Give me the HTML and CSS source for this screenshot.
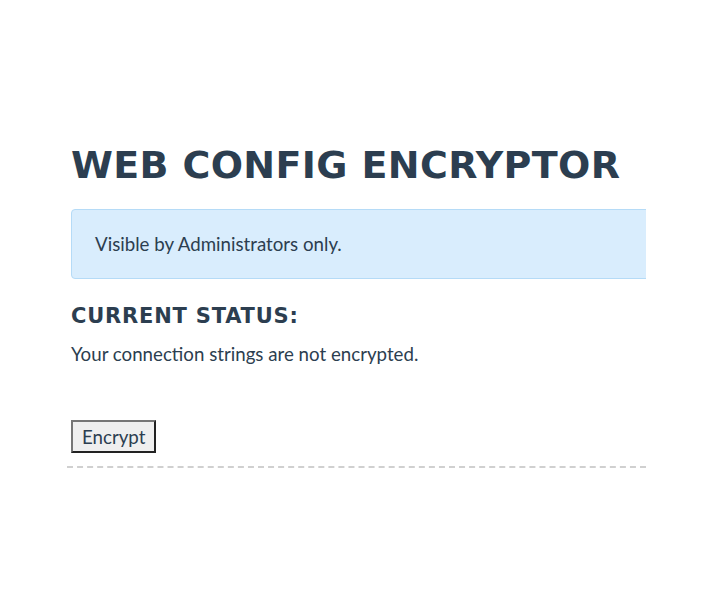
FILE: index.html
```html
<!DOCTYPE html>
<html>
<head>
<meta charset="utf-8">
<link rel="stylesheet" href="styles.css">
</head>
<body>
<div class="page">
  <div class="panel">
    <h1 class="title">WEB CONFIG ENCRYPTOR</h1>
    <div class="alert">Visible by Administrators only.</div>
    <h3 class="status-title">CURRENT STATUS:</h3>
    <p class="status-text">Your connection strings are not encrypted.</p>
    <button class="btn">Encrypt</button>
  </div>
</div>
</body>
</html>
```
FILE: styles.css
```css
html, body {
  margin: 0;
  padding: 0;
  background: #ffffff;
}
body {
  font-family: "Lato", "Liberation Sans", sans-serif;
  font-size: 18.7px;
  color: #2c3e50;
}
.page {
  padding-top: 137px;
  padding-left: 67px;
}
.panel {
  width: 575px;
  padding-left: 4px;
  overflow: hidden;
  border-bottom: 2px dashed #d0d0d0;
  padding-bottom: 13px;
}
.title {
  font-family: "DejaVu Sans", sans-serif;
  font-weight: bold;
  font-size: 38px;
  line-height: 56px;
  margin: 0 0 16px 0;
  letter-spacing: 0.35px;
  color: #2c3e50;
}
.alert {
  width: 620px;
  height: 70px;
  box-sizing: border-box;
  background: #d9edfd;
  border: 1px solid #b5dbf7;
  border-radius: 4px;
  padding: 0 23px;
  display: flex;
  align-items: center;
  color: #2c3e50;
  margin-bottom: 22px;
}
.status-title {
  font-family: "DejaVu Sans", sans-serif;
  font-weight: bold;
  font-size: 21px;
  line-height: 30px;
  margin: 0 0 11px 0;
  letter-spacing: 0.8px;
  color: #2c3e50;
}
.status-text {
  margin: 0 0 54px 0;
  line-height: 24px;
}
.btn {
  font-family: "Lato", sans-serif;
  font-size: 18.7px;
  color: #2c3e50;
  background: #efefef;
  border: 2px solid #767676;
  border-color: #767676 #222 #222 #767676;
  padding: 2px 9px;
  height: 33px;
  margin: 0;
  display: block;
}
```
